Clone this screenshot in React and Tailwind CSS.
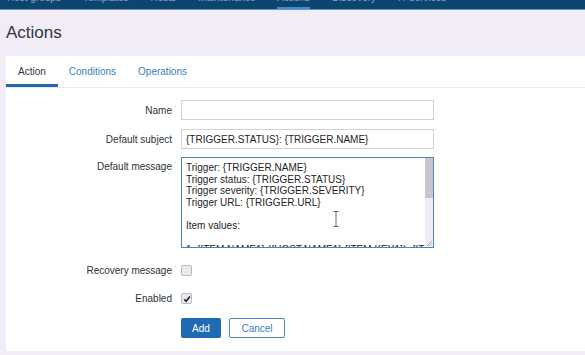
import React from 'react';

const navItems = ['Host groups', 'Templates', 'Hosts', 'Maintenance', 'Actions', 'Discovery', 'IT services'];

const messageLines = [
  'Trigger: {TRIGGER.NAME}',
  'Trigger status: {TRIGGER.STATUS}',
  'Trigger severity: {TRIGGER.SEVERITY}',
  'Trigger URL: {TRIGGER.URL}',
  '',
  'Item values:',
  '',
  '1. {ITEM.NAME1} ({HOST.NAME1}:{ITEM.KEY1}): {ITEM.VALUE1}',
  '2. {ITEM.NAME2} ({HOST.NAME2}:{ITEM.KEY2}): {ITEM.VALUE2}',
];

const Row = ({ label, top = false, className = '', children }) => (
  <div className={`flex ${top ? 'items-start' : 'items-center'} ${className}`}>
    <div className={`w-[166px] shrink-0 text-right text-[10px] text-[#2b3338] ${top ? 'pt-[4px] leading-[11.7px]' : 'leading-[11px]'}`}>
      {label}
    </div>
    <div className="ml-[9px]">{children}</div>
  </div>
);

const Checkbox = ({ checked }) => (
  <div className="w-[11px] h-[11px] rounded-[2px] border border-[#b9b7bf] bg-[#ece9f0] flex items-center justify-center">
    {checked && (
      <svg width="8" height="8" viewBox="0 0 8 8">
        <path d="M1.2 4.2 L3.1 6.2 L6.9 1.6" fill="none" stroke="#1d1d22" strokeWidth="1.6" />
      </svg>
    )}
  </div>
);

export default function App() {
  return (
    <div className="w-[585px] h-[355px] overflow-hidden bg-[#f1ecf6] font-['Liberation_Sans',Arial,sans-serif]">
      {/* top menu, mostly cut off */}
      <div className="h-[10px] bg-[#0c4670] overflow-hidden border-b border-[#6f95b8]">
        <div className="flex gap-[22px] pl-[7px] -mt-[7px] text-[10px] leading-[10px] text-[#8aa6c0]">
          {navItems.map((item) => (
            <div key={item} className="relative h-[16px]">
              {item}
              {item === 'Actions' && <div className="absolute left-0 right-0 top-[14px] h-[2px] bg-[#3b8fd8]" />}
            </div>
          ))}
        </div>
      </div>

      <div className="h-[46px] flex items-center pl-[6px] text-[17px] text-[#2e383e]">Actions</div>

      <div className="relative ml-[6px] h-[295px] bg-white">
        {/* tabs */}
        <div className="flex h-[32px] border-b border-[#ebe8f1] text-[10px]">
          <div className="px-[12px] flex items-center border-b-[3px] border-[#1f68ab] pt-[3px] text-[#2b3338]">Action</div>
          <div className="px-[11px] flex items-center text-[#3b7ec2]">Conditions</div>
          <div className="px-[11px] flex items-center text-[#3b7ec2]">Operations</div>
        </div>

        <div className="mt-[12px]">
          <Row label="Name">
            <div className="w-[253px] h-[20px] border border-[#d3d1d8] bg-white" />
          </Row>
          <Row label="Default subject" className="mt-[9px]">
            <div className="w-[253px] h-[20px] border border-[#d3d1d8] bg-white flex items-center px-[4px] text-[10px] text-[#1f2326]">
              {'{TRIGGER.STATUS}: {TRIGGER.NAME}'}
            </div>
          </Row>
          <Row label="Default message" top className="mt-[8px]">
            <div className="relative w-[253px] h-[91px] border border-[#4b84bf] bg-white overflow-hidden">
              <div className="pl-[4px] pt-[4px] pr-[12px] text-[10px] leading-[11.7px] text-[#1f2326] whitespace-pre">
                {messageLines.map((l, i) => (
                  <div key={i} className="h-[11.7px]">{l}</div>
                ))}
              </div>
              {/* scrollbar */}
              <div className="absolute top-0 right-0 bottom-0 w-[8px] bg-[#efecf3]">
                <div className="h-[40px] bg-[#c7c5cd]" />
              </div>
              <svg className="absolute right-[1px] bottom-[1px]" width="6" height="6" viewBox="0 0 6 6">
                <path d="M1 6 L6 1 M3.5 6 L6 3.5" stroke="#9a98a0" strokeWidth="0.8" />
              </svg>
            </div>
          </Row>
          <Row label="Recovery message" className="mt-[17px]">
            <Checkbox />
          </Row>
          <Row label="Enabled" className="mt-[17px]">
            <Checkbox checked />
          </Row>
          <div className="flex mt-[14px] pl-[175px] gap-[8px] text-[10px]">
            <div className="w-[40px] h-[20px] rounded-[2px] bg-[#1f6ab3] text-white flex items-center justify-center">Add</div>
            <div className="w-[56px] h-[20px] rounded-[2px] border border-[#4a87c3] bg-white text-[#3a7cc0] flex items-center justify-center">Cancel</div>
          </div>
        </div>

        {/* mouse text cursor */}
        <svg className="absolute left-[327px] top-[155px]" width="6" height="16" viewBox="0 0 6 16">
          <path d="M0.5 0.5 H5.5 M3 0.5 V15.5 M0.5 15.5 H5.5" stroke="#6a6870" strokeWidth="1" fill="none" />
        </svg>
      </div>
    </div>
  );
}
